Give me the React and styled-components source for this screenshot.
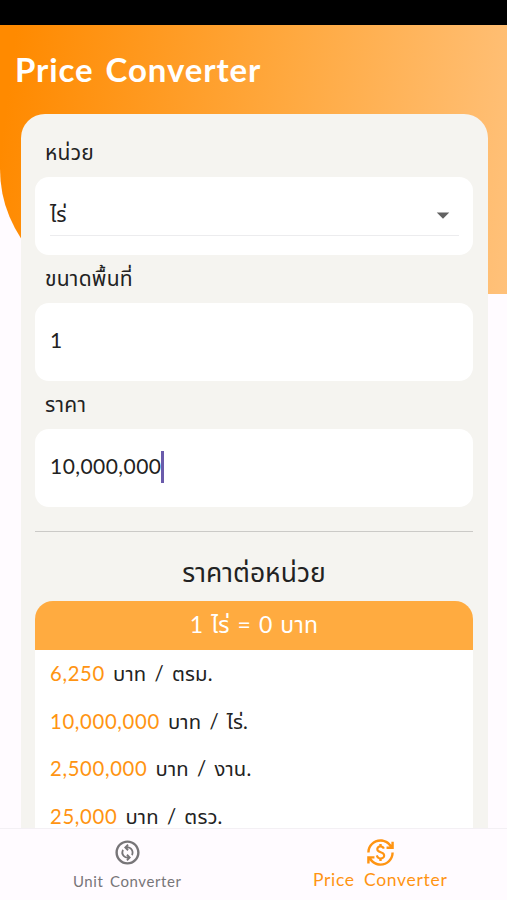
import React from 'react';
import styled, { createGlobalStyle, ThemeProvider } from 'styled-components';
import { MdArrowDropDown, MdCurrencyExchange, MdOutlineChangeCircle } from 'react-icons/md';

const theme = {
  colors: {
    primary: '#ff9412',
    band: '#ffab40',
    card: '#f5f4f0',
    page: '#fffbff',
    text: '#222222',
    muted: '#777578',
    caret: '#6a5bab',
  },
};

const GlobalStyle = createGlobalStyle`
  * {
    box-sizing: border-box;
  }

  body {
    margin: 0;
    font-family: 'Lato', 'Noto Sans Thai', 'Noto Sans', 'DejaVu Sans', sans-serif;
    color: ${({ theme }) => theme.colors.text};
  }
`;

const StyledScreen = styled.div`
  display: flex;
  flex-direction: column;
  width: 507px;
  height: 900px;
  overflow: hidden;
  background-color: ${({ theme }) => theme.colors.page};
`;

const StatusBar = styled.div`
  flex: none;
  height: 25px;
  background-color: #000;
`;

const Content = styled.main`
  position: relative;
  flex: 1;
  min-height: 0;
  overflow: hidden;

  &::before {
    content: '';
    position: absolute;
    top: 0;
    left: 0;
    right: 0;
    height: 269px;
    border-bottom-left-radius: 125px;
    background: linear-gradient(97deg, #ff8a00 3%, #ffa940 55%, #ffc17a 100%);
  }
`;

const Heading = styled.h1`
  position: relative;
  height: 89px;
  margin: 0;
  padding-left: 15px;
  font-size: 33px;
  line-height: 89px;
  font-weight: 700;
  letter-spacing: 0.9px;
  word-spacing: 3px;
  color: #fff;
`;

const Card = styled.section`
  position: relative;
  display: flex;
  flex-direction: column;
  width: 467px;
  height: 714px;
  margin-left: 21px;
  padding: 15px 15px 0 14px;
  border-radius: 24px 24px 0 0;
  background-color: ${({ theme }) => theme.colors.card};

  & > * {
    flex-shrink: 0;
  }
`;

const Label = styled.label`
  height: 48px;
  padding-left: 10px;
  font-size: 21px;
  line-height: 46px;
  letter-spacing: 0.25px;
`;

const Field = styled.div`
  height: 78px;
  padding: 17px 14px 0 15px;
  border-radius: 14px;
  background-color: #fff;
`;

const FieldValue = styled.div`
  display: flex;
  align-items: center;
  justify-content: space-between;
  height: 42px;
  padding-top: 1px;
  font-size: 21px;
  border-bottom: 1px solid ${({ $underlined }) => ($underlined ? '#ececee' : 'transparent')};

  svg {
    margin-right: 1px;
    color: #626262;
  }
`;

const Typed = styled.span`
  display: inline-flex;
  height: 32px;
  line-height: 29px;
  letter-spacing: 0.45px;
`;

const Caret = styled.i`
  width: 2.5px;
  height: 32px;
  background-color: ${({ theme }) => theme.colors.caret};
`;

const Divider = styled.hr`
  width: 100%;
  height: 1px;
  margin: 24px 0 0;
  border: 0;
  background-color: #cbcac7;
`;

const ResultTitle = styled.h2`
  height: 69px;
  margin: 0;
  font-size: 26.5px;
  line-height: 80px;
  font-weight: 400;
  text-align: center;
`;

const ResultBand = styled.div`
  height: 49px;
  border-radius: 18px 18px 0 0;
  font-size: 23px;
  line-height: 47px;
  letter-spacing: 0.2px;
  word-spacing: 1.8px;
  text-align: center;
  color: #fff;
  background-color: ${({ theme }) => theme.colors.band};
`;

const ResultList = styled.ul`
  flex: 1 0 0;
  min-height: 0;
  margin: 0;
  padding: 0 0 0 15px;
  list-style: none;
  background-color: #fff;
`;

const ResultRow = styled.li`
  height: 47.6px;
  font-size: 20.3px;
  line-height: 46px;
  letter-spacing: 0.15px;
  word-spacing: 2.8px;
  white-space: pre;

  span {
    letter-spacing: 0.65px;
    color: ${({ theme }) => theme.colors.primary};
  }
`;

const BottomNav = styled.nav`
  position: relative;
  display: grid;
  grid-template-columns: 1fr 1fr;
  flex: none;
  height: 72px;
  border-top: 1px solid #f3f0f4;
  background-color: ${({ theme }) => theme.colors.page};
`;

const NavItem = styled.a`
  display: flex;
  flex-direction: column;
  align-items: center;
  padding: 9px 0 0 ${({ $active }) => ($active ? 0 : 1)}px;
  font-size: ${({ $active }) => ($active ? 17.5 : 15)}px;
  line-height: ${({ $active }) => ($active ? 26 : 28)}px;
  letter-spacing: ${({ $active }) => ($active ? 0.7 : 0.6)}px;
  word-spacing: ${({ $active }) => ($active ? 4 : 2)}px;
  color: ${({ $active, theme }) => ($active ? theme.colors.primary : theme.colors.muted)};
`;

const results = [
  { price: '6,250', unit: 'ตรม.' },
  { price: '10,000,000', unit: 'ไร่.' },
  { price: '2,500,000', unit: 'งาน.' },
  { price: '25,000', unit: 'ตรว.' },
];

const App = () => (
  <ThemeProvider theme={theme}>
    <GlobalStyle />
    <StyledScreen>
      <StatusBar />
      <Content>
        <Heading>Price Converter</Heading>
        <Card>
          <Label>หน่วย</Label>
          <Field>
            <FieldValue $underlined>
              <span>ไร่</span>
              <MdArrowDropDown size={30} />
            </FieldValue>
          </Field>
          <Label>ขนาดพื้นที่</Label>
          <Field>
            <FieldValue>
              <Typed>1</Typed>
            </FieldValue>
          </Field>
          <Label>ราคา</Label>
          <Field>
            <FieldValue>
              <Typed>
                10,000,000
                <Caret />
              </Typed>
            </FieldValue>
          </Field>
          <Divider />
          <ResultTitle>ราคาต่อหน่วย</ResultTitle>
          <ResultBand>1 ไร่ = 0 บาท</ResultBand>
          <ResultList>
            {results.map(({ price, unit }) => (
              <ResultRow key={price}>
                <span>{price}</span> บาท / {unit}
              </ResultRow>
            ))}
          </ResultList>
        </Card>
      </Content>
      <BottomNav>
        <NavItem>
          <MdOutlineChangeCircle size={29} />
          Unit Converter
        </NavItem>
        <NavItem $active>
          <MdCurrencyExchange size={29} />
          Price Converter
        </NavItem>
      </BottomNav>
    </StyledScreen>
  </ThemeProvider>
);

export default App;
